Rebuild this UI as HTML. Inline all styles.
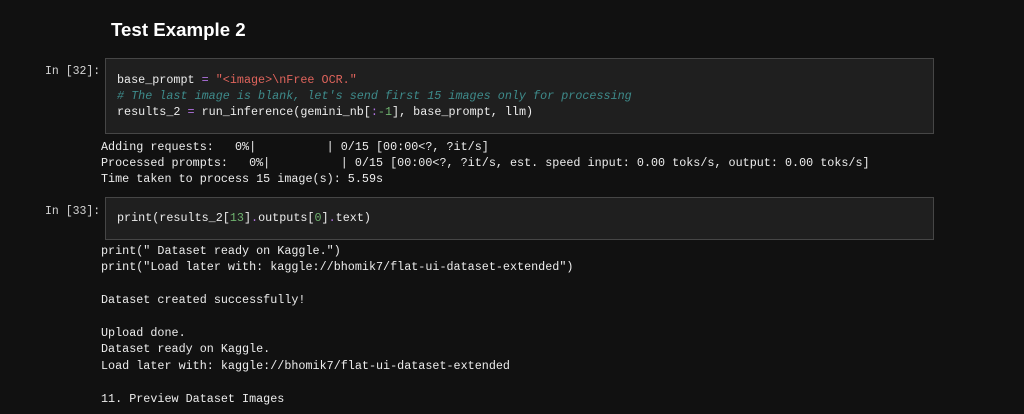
<!DOCTYPE html>
<html><head><style>
body{margin:0;width:1024px;height:414px;background:#111111;position:relative;overflow:hidden;font-family:"Liberation Mono",monospace;font-size:11.75px;color:#ececec}
.a{position:absolute;white-space:pre}
h1{position:absolute;left:111px;top:19px;margin:0;font:bold 18.7px "Liberation Sans",sans-serif;color:#fff}
.box{position:absolute;left:105px;width:829px;background:#1f1f1f;border:1px solid #464646;box-sizing:border-box}
.lbl{color:#d4d4d4;font-size:11.5px}
.s{color:#e0645c}.c{color:#3e8b8b;font-style:italic}.o{color:#b072e0}.n{color:#6fb36f}
</style></head><body>
<h1>Test Example 2</h1>
<div class="a lbl" style="left:45px;top:65px">In [32]:</div>
<div class="box" style="top:58px;height:76px"></div>
<div class="a" style="left:117px;top:72px;line-height:16px">base_prompt <span class="o">=</span> <span class="s">"&lt;image&gt;\nFree OCR."</span>
<span class="c"># The last image is blank, let's send first 15 images only for processing</span>
results_2 <span class="o">=</span> run_inference(gemini_nb[<span class="o">:</span><span class="n">-1</span>], base_prompt, llm)</div>
<div class="a" style="left:101px;top:139px;line-height:16px">Adding requests:   0%|          | 0/15 [00:00&lt;?, ?it/s]
Processed prompts:   0%|          | 0/15 [00:00&lt;?, ?it/s, est. speed input: 0.00 toks/s, output: 0.00 toks/s]
Time taken to process 15 image(s): 5.59s</div>
<div class="a lbl" style="left:45px;top:205px">In [33]:</div>
<div class="box" style="top:197px;height:43px"></div>
<div class="a" style="left:117px;top:211px">print(results_2[<span class="n">13</span>]<span class="o">.</span>outputs[<span class="n">0</span>]<span class="o">.</span>text)</div>
<div class="a" style="left:101px;top:243px;line-height:16.4px">print(" Dataset ready on Kaggle.")
print("Load later with: kaggle://bhomik7/flat-ui-dataset-extended")

Dataset created successfully!

Upload done.
Dataset ready on Kaggle.
Load later with: kaggle://bhomik7/flat-ui-dataset-extended

11. Preview Dataset Images</div>
</body></html>
